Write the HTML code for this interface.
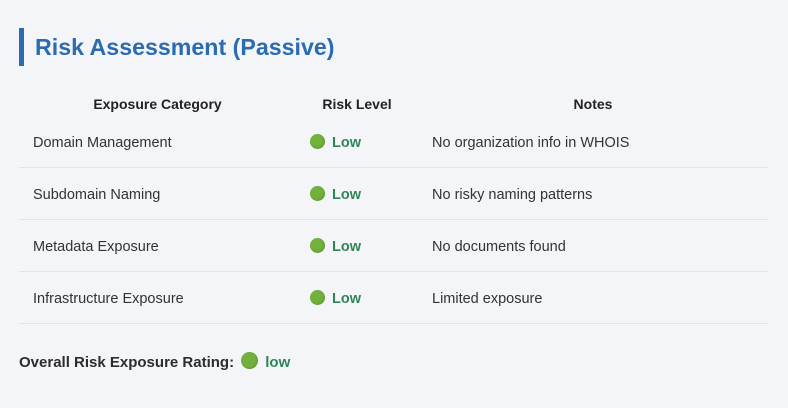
<!DOCTYPE html>
<html><head><meta charset="utf-8"><style>
body{margin:0;background:#f4f5f9;font-family:"Liberation Sans",sans-serif;width:788px;height:408px;overflow:hidden;position:relative;color:#333}
.bar{position:absolute;left:19px;top:28px;width:5px;height:38px;background:#2b6cb0}
h2{position:absolute;left:35px;top:33px;margin:0;font-size:23.2px;font-weight:bold;color:#2b6cb0;line-height:28px}
.row{position:absolute;left:19px;width:749px;height:51px;border-bottom:1px solid #e2e4ea;font-size:14.5px}
.row div{position:absolute;top:2px;line-height:51px}
.hd{position:absolute;top:92px;left:19px;width:749px;height:24px;font-size:14px;font-weight:bold;color:#222}
.hd div{position:absolute;top:0;line-height:24px;text-align:center}
.dot{display:inline-block;width:15px;height:15px;border-radius:50%;background:#72b13c;vertical-align:-2px;margin-right:7px;box-shadow:inset -1px -1px 2px rgba(0,0,0,.15)}
.low{color:#2f855a;font-weight:bold}
.ov{position:absolute;left:19px;top:352px;font-size:15px;font-weight:bold;color:#2d2d2d;line-height:20px}
</style></head><body>
<div class="bar"></div>
<h2>Risk Assessment (Passive)</h2>
<div class="hd"><div style="left:0;width:277px">Exposure Category</div><div style="left:277px;width:122px">Risk Level</div><div style="left:399px;width:350px">Notes</div></div>
<div class="row" style="top:116px"><div style="left:14px">Domain Management</div><div style="left:291px"><span class="dot"></span><span class="low">Low</span></div><div style="left:413px">No organization info in WHOIS</div></div>
<div class="row" style="top:168px"><div style="left:14px">Subdomain Naming</div><div style="left:291px"><span class="dot"></span><span class="low">Low</span></div><div style="left:413px">No risky naming patterns</div></div>
<div class="row" style="top:220px"><div style="left:14px">Metadata Exposure</div><div style="left:291px"><span class="dot"></span><span class="low">Low</span></div><div style="left:413px">No documents found</div></div>
<div class="row" style="top:272px"><div style="left:14px">Infrastructure Exposure</div><div style="left:291px"><span class="dot"></span><span class="low">Low</span></div><div style="left:413px">Limited exposure</div></div>
<div class="ov">Overall Risk Exposure Rating: <span class="dot" style="width:17px;height:17px;margin-left:3px;margin-right:7px"></span><span class="low">low</span></div>
</body></html>
